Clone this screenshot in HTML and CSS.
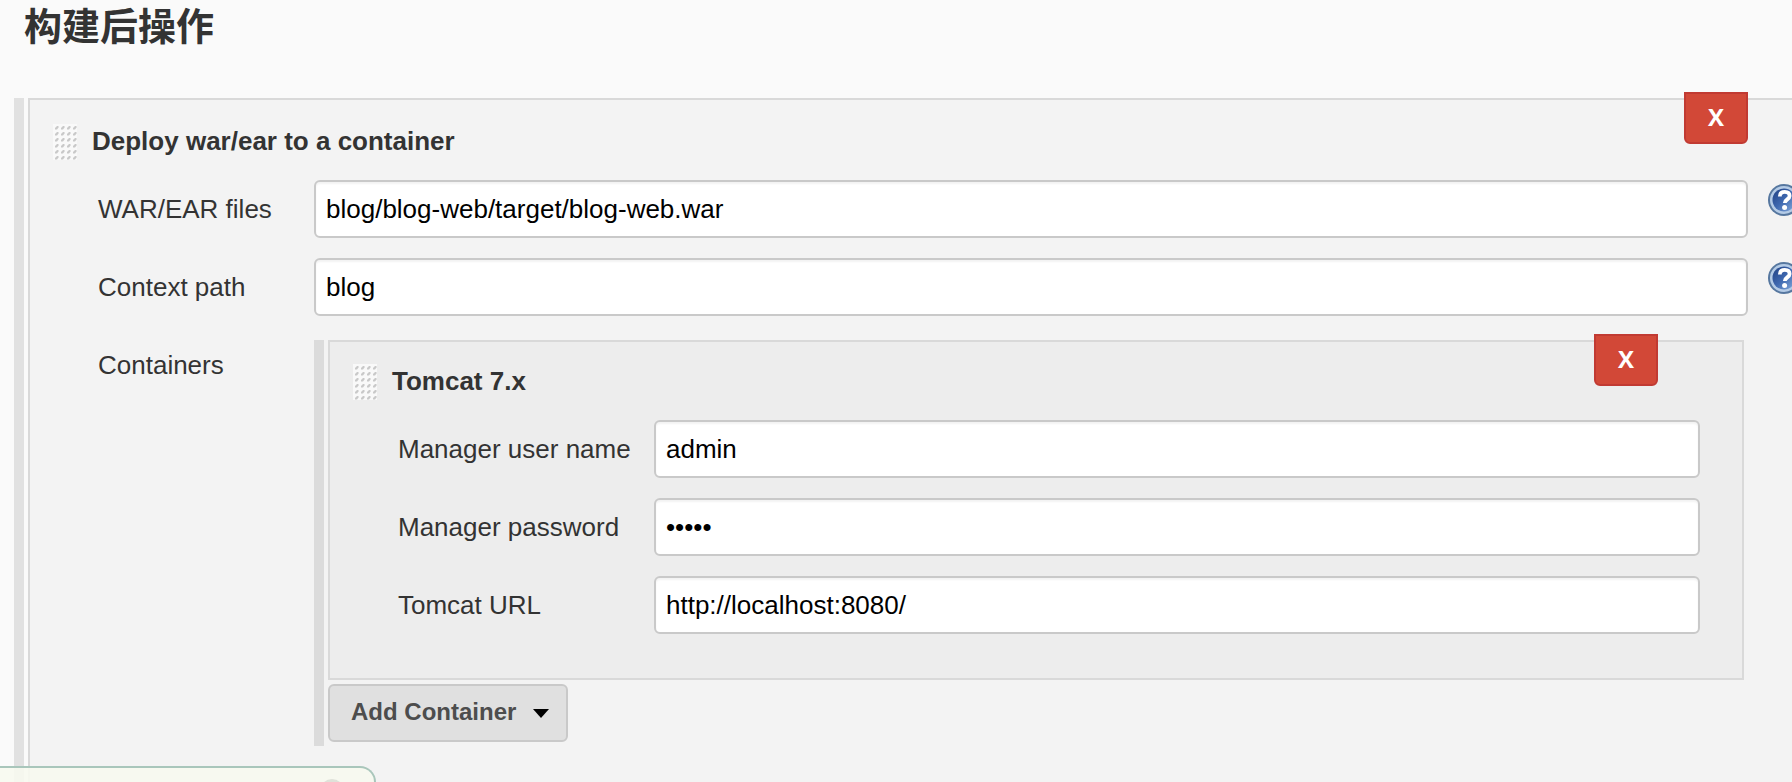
FILE: index.html
```
<!DOCTYPE html>
<html lang="zh-CN">
<head>
  <meta charset="UTF-8">
  <meta name="viewport" content="width=device-width, initial-scale=1.0">
  <title>构建后操作</title>
  <link rel="stylesheet" href="styles.css">
</head>
<body>
  <svg width="0" height="0" class="defs" aria-hidden="true">
    <defs>
      <linearGradient id="ball" x1="0" y1="0" x2="1" y2="1">
        <stop offset="0" stop-color="#1f3f82"/>
        <stop offset="0.5" stop-color="#3f69b0"/>
        <stop offset="1" stop-color="#86abdc"/>
      </linearGradient>
      <symbol id="help" viewBox="0 0 32 32">
        <circle cx="16" cy="16" r="16" fill="#56779f"/>
        <circle cx="16" cy="16" r="14" fill="#b4cbe6"/>
        <circle cx="16" cy="16" r="11.5" fill="url(#ball)"/>
        <path d="M11.8 12.5C11.8 9.2 14 7.8 16.8 7.8C20 7.8 21.6 9.6 21.6 12C21.6 15.4 16.8 15.4 16.8 19" fill="none" stroke="#fff" stroke-width="3.8"/>
        <circle cx="16.6" cy="23.6" r="2.5" fill="#fff"/>
      </symbol>
      <pattern id="dots" width="6" height="6" patternUnits="userSpaceOnUse">
        <rect width="6" height="6" fill="#f9f9f9"/>
        <path d="M2 5.5V4L4 2H5.5V3.5L4 5.5H2Z" fill="#c9c9c9"/>
      </pattern>
      <symbol id="grip" viewBox="0 0 24 36">
        <rect width="24" height="36" fill="url(#dots)"/>
      </symbol>
    </defs>
  </svg>

  <h1>构建后操作</h1>

  <form class="repeated outer">
    <div class="chunk">
      <div class="chunk-header">
        <svg class="grip" aria-hidden="true"><use href="#grip"/></svg>
        <h2>Deploy war/ear to a container</h2>
        <button type="button" class="delete">X</button>
      </div>
      <div class="rows">
        <div class="row">
          <label for="war">WAR/EAR files</label>
          <input type="text" id="war" value="blog/blog-web/target/blog-web.war">
          <a href="#" class="help" aria-label="Help"><svg><use href="#help"/></svg></a>
        </div>
        <div class="row">
          <label for="context">Context path</label>
          <input type="text" id="context" value="blog">
          <a href="#" class="help" aria-label="Help"><svg><use href="#help"/></svg></a>
        </div>
        <div class="row">
          <span class="label">Containers</span>
          <div class="repeated inner">
            <div class="chunk-list">
              <div class="chunk">
                <div class="chunk-header">
                  <svg class="grip" aria-hidden="true"><use href="#grip"/></svg>
                  <h2>Tomcat 7.x</h2>
                  <button type="button" class="delete">X</button>
                </div>
                <div class="rows">
                  <div class="row">
                    <label for="user">Manager user name</label>
                    <input type="text" id="user" value="admin">
                  </div>
                  <div class="row">
                    <label for="password">Manager password</label>
                    <input type="password" id="password" value="admin">
                  </div>
                  <div class="row">
                    <label for="url">Tomcat URL</label>
                    <input type="text" id="url" value="http://localhost:8080/">
                  </div>
                </div>
              </div>
              <button type="button" class="add">Add Container<span class="caret"></span></button>
            </div>
          </div>
        </div>
      </div>
    </div>
  </form>

  <div class="sticky-bar"><span class="sticky-knob"></span></div>
</body>
</html>
```

FILE: styles.css
```
* {
  box-sizing: border-box;
}

body {
  margin: 0;
  min-height: 100vh;
  display: flex;
  flex-direction: column;
  overflow-x: hidden;
  background-color: #fafafa;
  color: #333;
  font-family: "Liberation Sans", Arial, "Noto Sans CJK SC", sans-serif;
  font-size: 26px;
  line-height: 30px;
}

.defs {
  position: absolute;
}

h1 {
  margin: 0;
  padding: 0 24px 44px;
  font-size: 38px;
  line-height: 54px;
}

h2 {
  margin: 0;
  font-size: 26px;
}

/* Repeatable blocks with a bar on the left */
.repeated {
  display: flex;
  border-left: 10px solid #e1e1e1;
  padding-left: 4px;
}

.outer {
  flex: 1;
  margin-left: 14px;
}

.inner {
  grid-column: 2;
  margin: 4px 4px 0 0;
  padding-bottom: 4px;
  border-left-color: #dbdbdb;
}

.chunk {
  flex: 1;
  border: 2px solid #d9d9d9;
  background-color: #f3f3f3;
}

.outer > .chunk {
  border-right: none;
  border-bottom: none;
  padding-top: 2px;
}

.inner .chunk {
  background-color: #ededed;
  padding-bottom: 44px;
}

.chunk-list {
  flex: 1;
  display: flex;
  flex-direction: column;
  align-items: stretch;
  gap: 4px;
}

.chunk-header {
  display: flex;
  align-items: center;
  height: 78px;
  gap: 15px;
  padding: 0 44px 0 23px;
}

.inner .chunk-header {
  padding-right: 84px;
}

.grip {
  width: 24px;
  height: 36px;
  margin-top: 2px;
}

.rows {
  display: flex;
  flex-direction: column;
  gap: 20px;
  padding-left: 68px;
}

.row {
  display: grid;
  grid-template-columns: 216px minmax(0, 1fr) 44px;
}

.inner .row {
  grid-template-columns: 256px minmax(0, 1fr) 42px;
}

label,
.label {
  line-height: 58px;
}

input {
  width: 100%;
  height: 58px;
  padding: 0 10px;
  border: 2px solid #c9c9c9;
  border-radius: 6px;
  background-color: #fff;
  box-shadow: inset 0 2px 2px rgba(0, 0, 0, 0.05);
  color: #000;
  font: inherit;
}

.help {
  padding: 4px 0 0 20px;
}

.help svg {
  display: block;
  width: 32px;
  height: 32px;
}

/* Buttons */
.delete {
  align-self: flex-start;
  width: 64px;
  height: 52px;
  margin: -8px 0 0 auto;
  padding: 0 0 4px;
  border: 2px solid #c13a32;
  border-radius: 0 0 6px 6px;
  background-color: #d24837;
  color: #fff;
  font: bold 24px "Open Sans", sans-serif;
}

.outer > .chunk > .chunk-header .delete {
  margin-top: -10px;
}

.add {
  align-self: flex-start;
  display: flex;
  align-items: center;
  height: 58px;
  gap: 17px;
  padding: 0 17px 2px 21px;
  border: 2px solid #c9c9c9;
  border-radius: 6px;
  background-color: #e0e0e0;
  color: #4d4d4d;
  font: bold 24px "Liberation Sans", Arial, sans-serif;
}

.caret {
  margin-top: 3px;
  border: 8px solid transparent;
  border-top: 9px solid #000;
  border-bottom: none;
}

/* Save bar pinned to the bottom */
.sticky-bar {
  position: fixed;
  left: 0;
  bottom: 0;
  width: 376px;
  height: 16px;
  overflow: hidden;
  border: 2px solid #a9c6bb;
  border-width: 2px 2px 0 0;
  border-radius: 0 24px 0 0;
  background-color: rgba(247, 249, 240, 0.9);
}

.sticky-knob {
  display: block;
  width: 24px;
  height: 24px;
  margin: 11px 0 0 320px;
  border-radius: 12px;
  background-color: #dfe2d9;
}
```
